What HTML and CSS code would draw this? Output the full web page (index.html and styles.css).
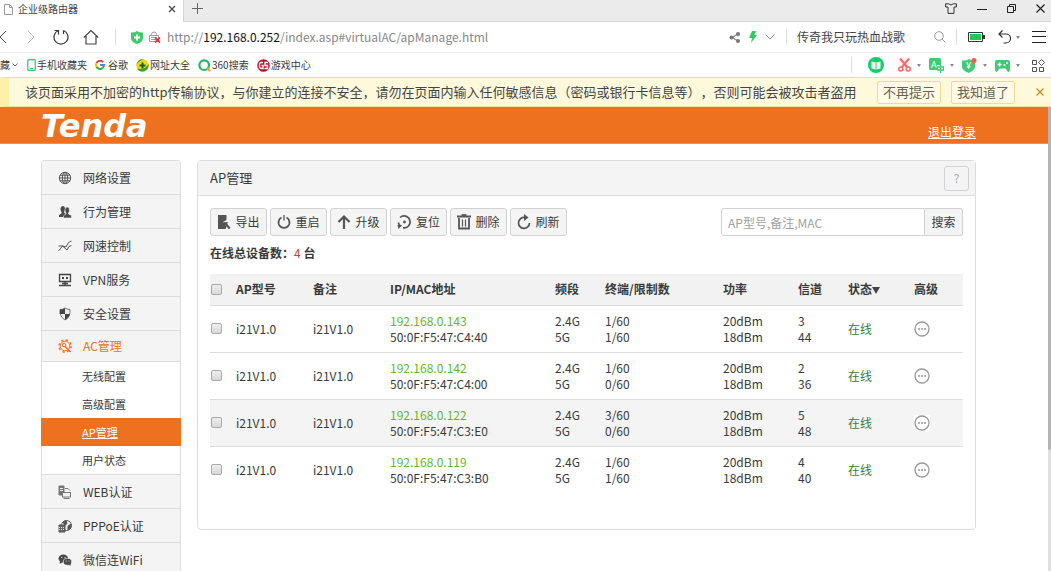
FILE: index.html
```html
<!DOCTYPE html>
<html lang="zh-CN">
<head>
<meta charset="utf-8">
<title>企业级路由器</title>
<link rel="stylesheet" href="styles.css">
</head>
<body>
<div class="tabs">
  <div class="tab">
    <svg width="9" height="11" viewBox="0 0 9 11" fill="#fff" stroke="#999"><path d="M.5.5h5l3 3v7h-8zM5.500.5v3h3"/></svg>
    <span class="tab-title">企业级路由器</span>
    <button class="plain" aria-label="关闭标签"><svg width="8" height="8" viewBox="0 0 8 8" stroke="#444" stroke-width="1.200"><path d="M1 1l6 6M7 1l-6 6"/></svg></button>
  </div>
  <button class="plain new-tab" aria-label="新标签"><svg width="11" height="11" viewBox="0 0 11 11" stroke="#666"><path d="M5.500 0v11M0 5.500h11"/></svg></button>
  <div class="window-buttons">
    <button class="plain" aria-label="皮肤"><svg width="12" height="11" viewBox="0 0 12 11" fill="none" stroke="#333"><path d="M3.500.8H.6v3.200h2.400v6.400h6V4h2.400V.8H8.500Q6 3 3.500.8z"/></svg></button>
    <button class="plain" aria-label="最小化"><svg width="10" height="10" viewBox="0 0 10 10" stroke="#222"><path d="M0 5.500h10"/></svg></button>
    <button class="plain" aria-label="还原"><svg width="9" height="9" viewBox="0 0 9 9" fill="none" stroke="#222"><path d="M.5 2.500h6v6h-6zM2.500 2.500v-2h6v6h-2"/></svg></button>
    <button class="plain" aria-label="关闭"><svg width="9" height="9" viewBox="0 0 9 9" stroke="#222" stroke-width="1.200"><path d="M.5.5l8 8M8.500.5l-8 8"/></svg></button>
  </div>
</div>

<div class="toolbar">
  <div class="nav">
    <button class="plain back" aria-label="后退"><svg width="8" height="14" viewBox="0 0 8 14" fill="none" stroke="#444"><path d="M6 1L0 7l6 6"/></svg></button>
    <button class="plain" aria-label="前进"><svg width="8" height="14" viewBox="0 0 8 14" fill="none" stroke="#bbb"><path d="M1 1l6 6-6 6"/></svg></button>
    <button class="plain" aria-label="刷新"><svg width="16" height="16" viewBox="0 0 16 16" fill="none" stroke="#333" stroke-width="1.200"><path d="M5.500 1.500a7 7 0 1 0 5 0M1.500 1.500h4v4M10.500 5V1.500"/></svg></button>
    <button class="plain" aria-label="主页"><svg width="16" height="16" viewBox="0 0 16 16" fill="none" stroke="#444" stroke-width="1.200"><path d="M.8 8.500L8 1.500l7.200 7M3 7v8h10V7"/></svg></button>
  </div>
  <i class="divider"></i>
  <div class="address">
    <svg width="12" height="13" viewBox="0 0 12 13"><path d="M0 1.500Q4 1.500 6 0q2 1.500 6 1.500V7q0 4-6 6-6-2-6-6z" fill="#3fca70"/><path d="M6 3.500v6M3 6.500h6" stroke="#fff" stroke-width="2"/></svg>
    <svg width="12" height="12" viewBox="0 0 12 12" fill="none"><path d="M2.500 4.500v-1a2.500 2.500 0 0 1 5 0v1M.5 4.500h9v6h-9zM2 6.500h6M2 8.500h6" stroke="#999"/><path d="M6 6.500l5 5M11 6.500l-5 5" stroke="#e02b2b" stroke-width="1.700"/></svg>
    <span class="url">http://<b>192.168.0.252</b>/index.asp#virtualAC/apManage.html</span>
  </div>
  <div class="address-tools">
    <svg width="12" height="11" viewBox="0 0 12 11"><path d="M9 2L3 5.500 9 9" fill="none" stroke="#888" stroke-width="1.300"/><g fill="#777"><circle cx="9" cy="2" r="2"/><circle cx="2.500" cy="5.500" r="2"/><circle cx="9" cy="9" r="2"/></g></svg>
    <svg width="8" height="12" viewBox="0 0 8 12" fill="#2fcb62"><path d="M3 0h4L5.500 4H8L2 12l1-5H0z"/></svg>
    <svg width="10" height="6" viewBox="0 0 10 6" fill="none" stroke="#888"><path d="M.5.5L5 5 9.500.5"/></svg>
  </div>
  <i class="divider"></i>
  <div class="hot-search">
    <span>传奇我只玩热血战歌</span>
    <svg width="12" height="12" viewBox="0 0 12 12" fill="none" stroke="#999"><circle cx="5" cy="5" r="4.300"/><path d="M8 8l3.500 3.500"/></svg>
  </div>
  <i class="divider"></i>
  <div class="system-tools">
    <svg width="18" height="10" viewBox="0 0 18 10"><path d="M.5.5h14v9H.5z" fill="#fff" stroke="#333"/><path d="M2 2h11v6H2z" fill="#20c952"/><path d="M16 3v4" stroke="#333" stroke-width="2"/></svg>
    <div class="undo">
      <svg width="13" height="14" viewBox="0 0 13 14" fill="none" stroke="#333" stroke-width="1.200"><path d="M4.500.5L1 4l3.500 3.500M1 4h7a4.500 4.500 0 0 1 0 9H5.500"/></svg>
      <i class="caret"></i>
    </div>
    <button class="plain" aria-label="菜单"><svg width="14" height="12" viewBox="0 0 14 12" stroke="#222"><path d="M0 .5h14M0 5.500h14M0 11.500h14"/></svg></button>
  </div>
</div>

<div class="bookmarks">
  <span>藏</span>
  <svg class="expand" width="6" height="4" viewBox="0 0 6 4" fill="none" stroke="#666"><path d="M.5.5L3 3 5.500.5"/></svg>
  <div class="links">
    <a href="#"><svg width="9" height="12" viewBox="0 0 9 12" fill="none" stroke="#35bd6d" stroke-width="1.200"><rect x=".8" y=".6" width="7.400" height="10.800" rx="1"/><path d="M3 9.500h3"/></svg>手机收藏夹</a>
    <a href="#"><svg class="spaced" width="10" height="10" viewBox="0 0 10 10" fill="none" stroke-width="2"><path d="M8.200 2.200A4 4 0 0 0 1.500 3.200" stroke="#ea4335"/><path d="M1.500 3.200a4 4 0 0 0 0 3.600" stroke="#fbbc05"/><path d="M1.500 6.800A4 4 0 0 0 7.600 8" stroke="#34a853"/><path d="M7.600 8A4 4 0 0 0 9 5H5" stroke="#4285f4"/></svg>谷歌</a>
    <a href="#"><svg width="13" height="13" viewBox="0 0 13 13"><circle cx="6.500" cy="6.500" r="6.300" fill="#f7d51d"/><path d="M1 9.500A6.300 6.300 0 0 0 12.500 5Q9 11.500 1 9.500zM.3 6A6.300 6.300 0 0 1 8 .4Q2.500 1.500.3 6z" fill="#2ca43a"/><path d="M6.500 3.500v6M3.500 6.500h6" stroke="#126526" stroke-width="2"/></svg>网址大全</a>
    <a href="#"><svg width="13" height="13" viewBox="0 0 13 13" fill="none"><circle cx="6.200" cy="6.200" r="4.800" stroke="#1db76a" stroke-width="2.200"/><path d="M9.500 9l2.500 3" stroke="#f5a623" stroke-width="2.400"/></svg>360搜索</a>
    <a href="#"><svg width="13" height="13" viewBox="0 0 13 13" fill="none"><circle cx="6.500" cy="6.500" r="6.300" fill="#b9142b"/><path d="M6 3.500H4A2 2 0 0 0 2.500 5v3A2 2 0 0 0 4 9.500h2v-3H4.500M11 3.500H8v3h2.500v3h-3" stroke="#fff" stroke-width="1.400"/></svg>游戏中心</a>
  </div>
  <i class="divider"></i>
  <div class="extensions">
    <svg class="reader" width="16" height="16" viewBox="0 0 16 16"><circle cx="8" cy="8" r="8" fill="#12cf66"/><path d="M3.500 4.500L8 5.500v7l-4.500-1zM12.500 4.500L8 5.500v7l4.500-1z" fill="#fff"/><path d="M8 5.500v7" stroke="#12cf66"/></svg>
    <div class="extension"><svg width="13" height="14" viewBox="0 0 13 14" fill="none" stroke="#ff6666"><path d="M2 .5l7.500 9M11 .5l-7.500 9" stroke-width="2.200"/><circle cx="2.800" cy="11" r="2" stroke-width="1.600"/><circle cx="10.200" cy="11" r="2" stroke-width="1.600"/></svg><i class="caret"></i></div>
    <div class="extension"><svg width="15" height="15" viewBox="0 0 15 15"><rect width="12" height="12" rx="1.500" fill="#41c976"/><text class="glyph" x="2" y="10">A</text><path d="M8 7h7v8H8z" fill="#fff"/><path d="M8.500 9h6v3h-6zM11.500 7v8" fill="none" stroke="#41c976" stroke-width="1.400"/></svg><i class="caret"></i></div>
    <div class="extension"><svg width="15" height="15" viewBox="0 0 15 15"><path d="M0 2.500Q5 2.500 7 1q2 1.500 6 1.500V9q0 3-6.500 6Q0 12 0 9z" fill="#41c976"/><text class="glyph" x="4" y="11">¥</text><circle cx="12" cy="2.500" r="2.500" fill="#f75b50"/></svg><i class="caret"></i></div>
    <div class="extension"><svg width="15" height="13" viewBox="0 0 15 13"><path d="M2 1h11q2 0 2 2v8q0 2-2 2L10.500 9.500h-6L2 13q-2 0-2-2V3q0-2 2-2z" fill="#41c976"/><path d="M4.500 3.500v4M2.500 5.500h4M8.500 6h2M11 4h2" stroke="#fff" stroke-width="1.400"/></svg><i class="caret"></i></div>
    <svg class="apps" width="13" height="13" viewBox="0 0 13 13" fill="none" stroke="#555"><path d="M.5 1.500h4v4h-4zM.5 8.500h4v4h-4zM7.500 8.500h4v4h-4zM9.500.5L12.500 3.500 9.500 6.500 6.500 3.500z"/></svg>
  </div>
</div>

<div class="notice">
  <p>该页面采用不加密的http传输协议，与你建立的连接不安全，请勿在页面内输入任何敏感信息（密码或银行卡信息等），否则可能会被攻击者盗用</p>
  <button class="notice-button">不再提示</button>
  <button class="notice-button">我知道了</button>
  <button class="plain dismiss" aria-label="关闭提示"><svg width="8" height="8" viewBox="0 0 8 8" stroke="#c48a1b" stroke-width="1.200"><path d="M.5.5l7 7M7.500.5l-7 7"/></svg></button>
</div>

<div class="viewport">
  <div class="page">
    <header class="masthead">
      <div class="logo">Tenda</div>
      <a class="logout" href="#">退出登录</a>
    </header>
    <div class="content">
      <nav class="sidebar">
        <a class="item" href="#"><svg width="14" height="14" viewBox="0 0 14 14" fill="none" stroke="#555"><circle cx="7" cy="7" r="5.700"/><ellipse cx="7" cy="7" rx="2.700" ry="5.700"/><path d="M7 1v12M1.300 7h11.400M2 4.200h10M2 9.800h10"/></svg>网络设置</a>
        <a class="item" href="#"><svg width="14" height="14" viewBox="0 0 14 14" fill="#4a4a4a"><path d="M2.500 3.500Q2.500 1 4.800 1T7 3.500Q7 6 6 7l.5 1L8 9v3H1v-2l2.500-1.500V7Q2.500 6 2.500 3.500z"/><path d="M7 5q0-3 2.200-3t2.300 3q0 2-1 3v1l3 1.500V13H5.500v-2.200L8 9.200V8Q7 7 7 5z" stroke="#f4f4f4" stroke-width=".6"/></svg>行为管理</a>
        <a class="item" href="#"><svg width="14" height="14" viewBox="0 0 14 14" fill="none" stroke="#555"><path d="M.5 12l4-5 4.500 4 2-3.500 2.500-1M.5 7l4.500 0M5 7l3 1 2.500-4.500L13.500 2"/></svg>网速控制</a>
        <a class="item" href="#"><svg width="14" height="14" viewBox="0 0 14 14" fill="none" stroke="#444"><path d="M1.500 1.500h11v7h-11zM7 9v4M1 12.500h12M4 10.500h6" stroke-width="1.300"/><path d="M4 5h2M8 5h2" stroke-width="1.800"/></svg>VPN服务</a>
        <a class="item" href="#"><svg width="14" height="14" viewBox="0 0 14 14"><path d="M7 1Q9 2.500 12 2.500q.5 7.500-5 10.500-5.500-3-5-10.500Q5 2.500 7 1z" fill="#eee" stroke="#777"/><path d="M7 1v6H1.700l.3-4.500Q5 2.500 7 1zM7 7h5q-1 4-5 6z" fill="#444"/></svg>安全设置</a>
        <a class="item open" href="#"><svg width="14" height="14" viewBox="0 0 14 14" fill="none" stroke="#ee7120"><circle cx="7" cy="7" r="4.800"/><circle cx="7" cy="7" r="6.100" stroke-width="1.400" stroke-dasharray="2.400 2.390"/><circle cx="6" cy="6" r="1.800"/><path d="M7 7.500l5.500 5.500" stroke-width="1.600"/></svg>AC管理</a>
        <div class="submenu">
          <a href="#">无线配置</a>
          <a href="#">高级配置</a>
          <a class="current" href="#">AP管理</a>
          <a href="#">用户状态</a>
        </div>
        <a class="item" href="#"><svg width="14" height="14" viewBox="0 0 14 14" fill="none" stroke="#777"><path d="M1 1h5v9H1z" fill="#777"/><path d="M2 3.500h3M2 5.500h3" stroke="#eee"/><path d="M7 3.500h3l2 2" /><rect x="4.500" y="7.500" width="8" height="4.500" fill="#f4f4f4"/><path d="M5.500 13.500h6"/></svg>WEB认证</a>
        <a class="item" href="#"><svg width="14" height="14" viewBox="0 0 14 14" fill="none" stroke="#555"><circle cx="8.500" cy="6.500" r="5"/><path d="M5 3l3-1.500 1 3-2 2zM10 7l3-2-.5 4-2.500 2z" fill="#555"/><path d="M1 6h6v7H1z" fill="#666"/><path d="M1 8.500h6M1 10.500h6" stroke="#ddd" stroke-dasharray="1 1"/></svg>PPPoE认证</a>
        <a class="item" href="#"><svg width="14" height="14" viewBox="0 0 14 14"><ellipse cx="5.300" cy="5.500" rx="4.800" ry="4" fill="#4a4a4a"/><path d="M2 8l-.5 3L5 9z" fill="#4a4a4a"/><ellipse cx="9.500" cy="8.800" rx="4.200" ry="3.500" fill="#4a4a4a" stroke="#f4f4f4" stroke-width=".7"/><path d="M10 11l2.500 2V11z" fill="#4a4a4a"/><g fill="#f4f4f4"><circle cx="3.800" cy="4.500" r=".6"/><circle cx="7" cy="4.500" r=".6"/><circle cx="8.200" cy="8" r=".5"/><circle cx="11" cy="8" r=".5"/></g></svg>微信连WiFi</a>
      </nav>

      <main class="panel">
        <div class="panel-head">
          <h1>AP管理</h1>
          <button class="button help">?</button>
        </div>
        <div class="panel-body">
          <div class="actions">
            <button class="button"><svg width="14" height="16" viewBox="0 0 14 16" fill="#555"><path d="M1 1h8.500v5L6 8l3.500 4.500-1 2.500H1z"/><path d="M6.500 8l5 .2-1.500 1.500 3.500 4-1.500 1.600-3.700-4L6.800 13z"/></svg>导出</button>
            <button class="button"><svg width="14" height="16" viewBox="0 0 14 16" fill="none" stroke="#555" stroke-width="1.800"><path d="M4.500 3.500a5.500 5.500 0 1 0 5 0"/><path d="M7 1v5.500" stroke-width="1.300"/></svg>重启</button>
            <button class="button"><svg width="14" height="16" viewBox="0 0 14 16" fill="none" stroke="#555" stroke-width="2.200"><path d="M7 15V2.500M1.500 8L7 2.500 12.500 8"/></svg>升级</button>
            <button class="button"><svg width="15" height="16" viewBox="0 0 15 16" fill="none" stroke="#555" stroke-width="1.600"><path d="M3 3.500A6 6 0 1 1 6 13.800"/><path d="M1.300 8.500A6 6 0 0 0 4 12.500"/><path d="M.5 11h4.500l-3.500 4z" fill="#555" stroke="none"/><circle cx="7.500" cy="8" r="1.400" fill="#555" stroke="none"/></svg>复位</button>
            <button class="button"><svg width="14" height="16" viewBox="0 0 14 16" fill="none" stroke="#555"><path d="M0 2.500h14" stroke-width="2"/><path d="M4.500 1h5" stroke-width="1.800"/><path d="M2 4v10.500h10V4" stroke-width="1.800"/><path d="M5.500 5.500v7M8.500 5.500v7" stroke-width="1.200"/></svg>删除</button>
            <button class="button"><svg width="14" height="16" viewBox="0 0 14 16" fill="none" stroke="#555" stroke-width="1.700"><path d="M8 3.500a5.500 5.500 0 1 0 4.500 5.500"/><path d="M7 0l4.500 3.500L7 7z" fill="#555" stroke="none"/></svg>刷新</button>
            <form class="search">
              <input type="text" placeholder="AP型号,备注,MAC" aria-label="搜索AP">
              <button type="button">搜索</button>
            </form>
          </div>
          <p class="total">在线总设备数：<em>4</em> 台</p>
          <table>
            <colgroup><col class="c-check"><col class="c-name"><col class="c-name"><col class="c-addr"><col class="c-small"><col class="c-limit"><col class="c-power"><col class="c-small"><col class="c-state"><col></colgroup>
            <thead>
              <tr><th><input type="checkbox" aria-label="全选"></th><th>AP型号</th><th>备注</th><th>IP/MAC地址</th><th>频段</th><th>终端/限制数</th><th>功率</th><th>信道</th><th>状态<i class="sort"></i></th><th>高级</th></tr>
            </thead>
            <tbody>
              <tr><td><input type="checkbox" aria-label="192.168.0.143"></td><td>i21V1.0</td><td>i21V1.0</td><td><a href="#">192.168.0.143</a><br>50:0F:F5:47:C4:40</td><td>2.4G<br>5G</td><td>1/60<br>1/60</td><td>20dBm<br>18dBm</td><td>3<br>44</td><td class="online">在线</td><td><button class="plain more" aria-label="高级"><svg width="16" height="16" viewBox="0 0 16 16" fill="none" stroke="#999"><circle cx="8" cy="8" r="7" stroke-width="1.300"/><path d="M4 8h2M7 8h2M10 8h2" stroke-width="1.600"/></svg></button></td></tr>
              <tr><td><input type="checkbox" aria-label="192.168.0.142"></td><td>i21V1.0</td><td>i21V1.0</td><td><a href="#">192.168.0.142</a><br>50:0F:F5:47:C4:00</td><td>2.4G<br>5G</td><td>1/60<br>0/60</td><td>20dBm<br>18dBm</td><td>2<br>36</td><td class="online">在线</td><td><button class="plain more" aria-label="高级"><svg width="16" height="16" viewBox="0 0 16 16" fill="none" stroke="#999"><circle cx="8" cy="8" r="7" stroke-width="1.300"/><path d="M4 8h2M7 8h2M10 8h2" stroke-width="1.600"/></svg></button></td></tr>
              <tr class="hovered"><td><input type="checkbox" aria-label="192.168.0.122"></td><td>i21V1.0</td><td>i21V1.0</td><td><a href="#">192.168.0.122</a><br>50:0F:F5:47:C3:E0</td><td>2.4G<br>5G</td><td>3/60<br>0/60</td><td>20dBm<br>18dBm</td><td>5<br>48</td><td class="online">在线</td><td><button class="plain more" aria-label="高级"><svg width="16" height="16" viewBox="0 0 16 16" fill="none" stroke="#999"><circle cx="8" cy="8" r="7" stroke-width="1.300"/><path d="M4 8h2M7 8h2M10 8h2" stroke-width="1.600"/></svg></button></td></tr>
              <tr><td><input type="checkbox" aria-label="192.168.0.119"></td><td>i21V1.0</td><td>i21V1.0</td><td><a href="#">192.168.0.119</a><br>50:0F:F5:47:C3:B0</td><td>2.4G<br>5G</td><td>1/60<br>1/60</td><td>20dBm<br>18dBm</td><td>4<br>40</td><td class="online">在线</td><td><button class="plain more" aria-label="高级"><svg width="16" height="16" viewBox="0 0 16 16" fill="none" stroke="#999"><circle cx="8" cy="8" r="7" stroke-width="1.300"/><path d="M4 8h2M7 8h2M10 8h2" stroke-width="1.600"/></svg></button></td></tr>
            </tbody>
          </table>
        </div>
      </main>
    </div>
  </div>
  <div class="scrollbar"><div class="thumb"></div></div>
</div>
</body>
</html>
```

FILE: styles.css
```css
* { box-sizing: border-box; }
body {
  margin: 0;
  height: 100vh;
  overflow: hidden;
  display: flex;
  flex-direction: column;
  background: #fff;
  color: #3a3a3a;
  font: 12px/16px "Noto Sans CJK SC", sans-serif;
}
button, input { font: inherit; color: inherit; }
a { color: inherit; text-decoration: none; }
p, h1 { margin: 0; }
svg { display: block; flex: none; }
.plain {
  display: flex;
  align-items: center;
  justify-content: center;
  padding: 0;
  border: 0;
  background: none;
}
.divider { flex: none; width: 1px; height: 16px; background: #ddd; }
.caret {
  flex: none;
  border: 2px solid transparent;
  border-top: 3px solid #888;
  border-bottom: 0;
}

/* Browser tabs */
.tabs {
  flex: none;
  display: flex;
  height: 22px;
  background: #ebebeb;
  border-bottom: 1px solid #d8d8d8;
}
.tab {
  display: flex;
  align-items: center;
  gap: 5px;
  width: 184px;
  height: 22px;
  padding: 0 7px 4px 4px;
  background: #fff;
  border-right: 1px solid #d4d4d4;
  font-size: 10px;
  color: #444;
}
.tab-title { flex: 1; }
.new-tab { width: 26px; padding-bottom: 4px; }
.window-buttons {
  display: flex;
  align-items: center;
  gap: 20px;
  margin-left: auto;
  padding: 0 6px 4px 0;
}

/* Address bar */
.toolbar {
  flex: none;
  display: flex;
  align-items: center;
  height: 31px;
  border-bottom: 1px solid #eee;
}
.nav { display: flex; width: 115px; }
.nav .plain { width: 30px; }
.nav .back { width: 16px; justify-content: flex-start; }
.address {
  flex: 1;
  display: flex;
  align-items: center;
  gap: 6px;
  padding-left: 15px;
}
.url { color: #888; white-space: nowrap; }
.url b { color: #111; font-weight: 400; }
.address-tools {
  display: flex;
  align-items: center;
  gap: 8px;
  padding-right: 11px;
}
.hot-search {
  display: flex;
  align-items: center;
  justify-content: space-between;
  width: 169px;
  padding: 0 10px 0 10px;
  color: #444;
}
.system-tools {
  display: flex;
  align-items: center;
  gap: 12px;
  padding: 0 5px 0 11px;
}
.undo { display: flex; align-items: center; gap: 5px; }

/* Bookmarks */
.bookmarks {
  flex: none;
  display: flex;
  align-items: center;
  height: 24px;
  font-size: 10px;
}
.expand { margin: 0 9px 0 2px; }
.links { flex: 1; display: flex; gap: 8px; white-space: nowrap; }
.links a { display: flex; align-items: center; gap: 1px; }
.spaced { margin-right: 2px; }
.extensions {
  display: flex;
  align-items: center;
  gap: 8px;
  padding: 0 6px 0 16px;
}
.extension { display: flex; align-items: center; gap: 6px; }
.reader { margin-right: 6px; }
.apps { margin-left: 4px; }
.glyph { fill: #fff; font: 9px "Noto Sans", sans-serif; }

/* Security notice */
.notice {
  flex: none;
  display: flex;
  align-items: center;
  gap: 10px;
  height: 30px;
  padding: 0 1px 0 16px;
  border: solid #f1dfa0;
  border-width: 1px 0;
  border-left: 9px solid #fdf0a9;
  background: #fff9dc;
  font-size: 13px;
  white-space: nowrap;
}
.notice p { flex: 1; color: #444; text-spacing-trim: space-all; }
.notice-button {
  height: 23px;
  padding: 0 5px;
  border: 1px solid #f0dc8c;
  border-radius: 2px;
  background: #fffbe6;
  color: #666350;
}
.dismiss { width: 20px; margin-left: 5px; }

/* Router page */
.viewport { flex: 1; min-height: 0; display: flex; }
.page { flex: 1; min-width: 0; overflow: hidden; }
.scrollbar { width: 3px; background: #e0e0e0; }
.thumb { height: 74%; background: #b4b4b4; border-radius: 0 0 2px 2px; }
.masthead {
  display: flex;
  align-items: center;
  justify-content: space-between;
  height: 37px;
  padding: 0 72px 0 41px;
  background: #ee7120;
  border-bottom: 1px solid #e8905a;
  color: #fff;
}
.logo { padding-top: 2px; font: italic bold 32px/34px "DejaVu Sans", sans-serif; }
.logout { padding-top: 13px; text-decoration: underline; }
.content {
  display: flex;
  align-items: flex-start;
  gap: 16px;
  padding: 16px 72px 0 41px;
}
.sidebar {
  flex: none;
  width: 140px;
  border: 1px solid #ddd;
  border-radius: 3px 3px 0 0;
}
.item {
  display: flex;
  align-items: center;
  gap: 11px;
  height: 34px;
  padding-left: 16px;
  border-bottom: 1px solid #ddd;
  background: #f4f4f4;
}
.open { height: 31px; color: #ee7120; }
.submenu { border-bottom: 1px solid #ddd; font-size: 11px; }
.submenu a {
  display: flex;
  align-items: center;
  height: 28px;
  margin: 0 -1px;
  padding-left: 41px;
}
.submenu .current { background: #ee7120; color: #fff; text-decoration: underline; }

.panel {
  flex: 1;
  min-width: 0;
  border: 1px solid #ddd;
  border-radius: 4px;
}
.panel-head {
  display: flex;
  align-items: center;
  justify-content: space-between;
  height: 35px;
  padding: 0 6px 0 12px;
  border-bottom: 1px solid #ddd;
  background: #f4f4f4;
}
h1 { font-size: 13px; font-weight: 400; }
.button {
  display: flex;
  align-items: center;
  justify-content: center;
  gap: 4px;
  width: 57px;
  height: 28px;
  padding: 0;
  border: 1px solid #d2d2d2;
  border-radius: 3px;
  background: #f4f4f4;
}
.help { width: 25px; height: 25px; color: #aaa; }
.panel-body { padding: 12px 12px 36px; }
.actions { display: flex; gap: 3px; }
.search { display: flex; width: 242px; margin-left: auto; }
.search input {
  flex: 1;
  min-width: 0;
  height: 28px;
  padding: 0 6px;
  border: 1px solid #d2d2d2;
  border-radius: 3px 0 0 3px;
  outline: 0;
}
.search input::placeholder { color: #a0a0a0; opacity: 1; }
.search button {
  width: 38px;
  padding: 0;
  border: 1px solid #d2d2d2;
  border-left: 0;
  border-radius: 0 3px 3px 0;
  background: #f4f4f4;
}
.total { padding: 9px 0 13px; font-weight: 700; }
.total em { color: #c0453c; font-style: normal; font-weight: 400; }

table { width: 100%; border-collapse: collapse; table-layout: fixed; }
.c-check { width: 26px; }
.c-name { width: 77px; }
.c-addr { width: 165px; }
.c-small { width: 50px; }
.c-limit { width: 118px; }
.c-power { width: 75px; }
.c-state { width: 66px; }
th, td { padding: 0; text-align: left; vertical-align: middle; white-space: nowrap; }
th { height: 31px; background: #f2f2f2; }
td { height: 47px; }
thead tr, tbody tr { border-bottom: 1px solid #ddd; }
tbody tr:last-child { border-bottom: 0; }
.hovered { background: #f4f4f4; }
td a { color: #62b82c; }
.online { color: #3c7a43; }
.more { width: 16px; background: #fff; border-radius: 0; }
.sort {
  display: inline-block;
  border: 4px solid transparent;
  border-top: 7px solid #444;
  border-bottom: 0;
}
input[type="checkbox"] {
  appearance: none;
  display: block;
  width: 11px;
  height: 11px;
  margin: 0 1px;
  border: 1px solid #aaa;
  border-radius: 2px;
  background: linear-gradient(#eee, #d8d8d8);
}
```
